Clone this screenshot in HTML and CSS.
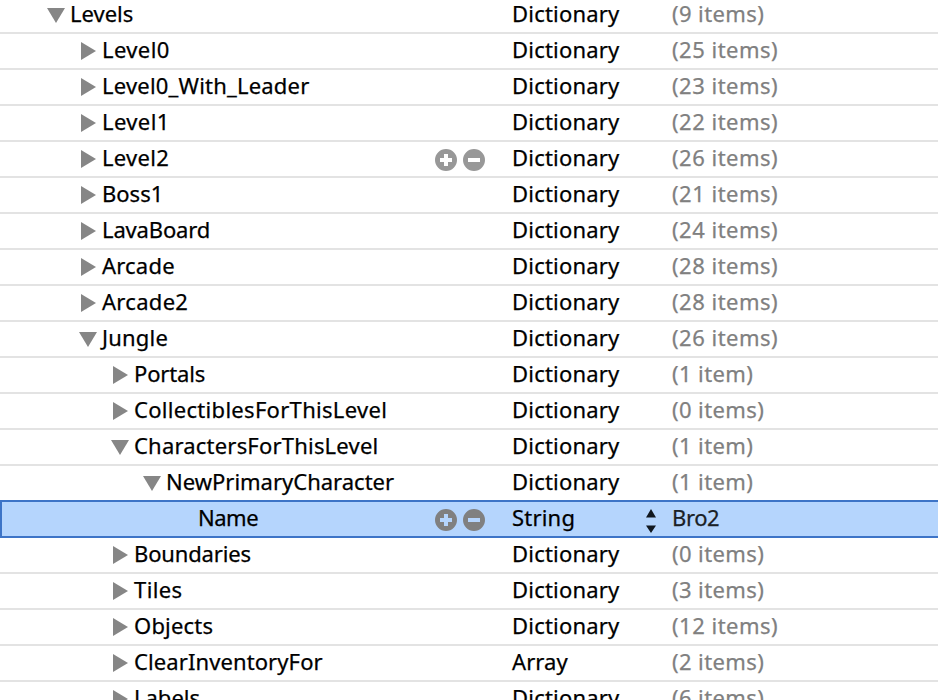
FILE: index.html
```
<!DOCTYPE html>
<html lang="en">
<head>
<meta charset="utf-8">
<title>Property list</title>
<link rel="stylesheet" href="styles.css">
</head>
<body>
<svg class="defs" aria-hidden="true">
  <symbol id="closed" viewBox="0 0 18 20"><path d="M2 1v18l15-9z"/></symbol>
  <symbol id="open" viewBox="0 0 18 20"><path d="M0 3h18L9 18z"/></symbol>
  <symbol id="plus" viewBox="0 0 22 22"><path fill-rule="evenodd" d="M11 0a11 11 0 1 0 0 22a11 11 0 1 0 0-22zM9 5h4v4h4v4h-4v4h-4v-4h-4v-4h4z"/></symbol>
  <symbol id="minus" viewBox="0 0 22 22"><path fill-rule="evenodd" d="M11 0a11 11 0 1 0 0 22a11 11 0 1 0 0-22zM5 9h12v4h-12z"/></symbol>
</svg>
<main class="plist">
  <div class="row"><div class="key d0"><svg class="tri"><use href="#open"/></svg><span>Levels</span></div><div class="type">Dictionary</div><div class="value few">(9 items)</div></div>
  <div class="row"><div class="key d1"><svg class="tri"><use href="#closed"/></svg><span class="w4">Level0</span></div><div class="type">Dictionary</div><div class="value">(25 items)</div></div>
  <div class="row"><div class="key d1"><svg class="tri"><use href="#closed"/></svg><span class="w2">Level0_With_Leader</span></div><div class="type">Dictionary</div><div class="value">(23 items)</div></div>
  <div class="row"><div class="key d1"><svg class="tri"><use href="#closed"/></svg><span class="w4">Level1</span></div><div class="type">Dictionary</div><div class="value">(22 items)</div></div>
  <div class="row"><div class="key d1"><svg class="tri"><use href="#closed"/></svg><span class="w3">Level2</span><div class="actions"><svg><use href="#plus"/></svg><svg><use href="#minus"/></svg></div></div><div class="type">Dictionary</div><div class="value">(26 items)</div></div>
  <div class="row"><div class="key d1"><svg class="tri"><use href="#closed"/></svg><span>Boss1</span></div><div class="type">Dictionary</div><div class="value">(21 items)</div></div>
  <div class="row"><div class="key d1"><svg class="tri"><use href="#closed"/></svg><span class="n1">LavaBoard</span></div><div class="type">Dictionary</div><div class="value">(24 items)</div></div>
  <div class="row"><div class="key d1"><svg class="tri"><use href="#closed"/></svg><span class="w2">Arcade</span></div><div class="type">Dictionary</div><div class="value">(28 items)</div></div>
  <div class="row"><div class="key d1"><svg class="tri"><use href="#closed"/></svg><span class="w3">Arcade2</span></div><div class="type">Dictionary</div><div class="value">(28 items)</div></div>
  <div class="row"><div class="key d1"><svg class="tri"><use href="#open"/></svg><span class="w2">Jungle</span></div><div class="type">Dictionary</div><div class="value">(26 items)</div></div>
  <div class="row"><div class="key d2"><svg class="tri"><use href="#closed"/></svg><span class="n1">Portals</span></div><div class="type">Dictionary</div><div class="value few">(1 item)</div></div>
  <div class="row"><div class="key d2"><svg class="tri"><use href="#closed"/></svg><span class="w3">CollectiblesForThisLevel</span></div><div class="type">Dictionary</div><div class="value few">(0 items)</div></div>
  <div class="row"><div class="key d2"><svg class="tri"><use href="#open"/></svg><span class="w2">CharactersForThisLevel</span></div><div class="type">Dictionary</div><div class="value few">(1 item)</div></div>
  <div class="row"><div class="key d3"><svg class="tri"><use href="#open"/></svg><span>NewPrimaryCharacter</span></div><div class="type">Dictionary</div><div class="value few">(1 item)</div></div>
  <div class="row selected"><div class="key d4"><span class="n5">Name</span><div class="actions"><svg><use href="#plus"/></svg><svg><use href="#minus"/></svg></div></div><div class="type"><span>String</span><svg class="stepper" viewBox="0 0 10 24"><path d="M0 8.500h10L5 0zM0 16.500h10L5 24z"/></svg></div><div class="value">Bro2</div></div>
  <div class="row"><div class="key d2"><svg class="tri"><use href="#closed"/></svg><span class="n1">Boundaries</span></div><div class="type">Dictionary</div><div class="value few">(0 items)</div></div>
  <div class="row"><div class="key d2"><svg class="tri"><use href="#closed"/></svg><span class="w4">Tiles</span></div><div class="type">Dictionary</div><div class="value few">(3 items)</div></div>
  <div class="row"><div class="key d2"><svg class="tri"><use href="#closed"/></svg><span class="w2">Objects</span></div><div class="type">Dictionary</div><div class="value">(12 items)</div></div>
  <div class="row"><div class="key d2"><svg class="tri"><use href="#closed"/></svg><span class="w1">ClearInventoryFor</span></div><div class="type"><span class="w1">Array</span></div><div class="value few">(2 items)</div></div>
  <div class="row"><div class="key d2"><svg class="tri"><use href="#closed"/></svg><span>Labels</span></div><div class="type">Dictionary</div><div class="value few">(6 items)</div></div>
</main>
</body>
</html>
```
FILE: styles.css
```
* { box-sizing: border-box; }
html, body { height: 100%; overflow: hidden; }
body {
  margin: 0;
  background: #fff;
  color: #000;
  font: 22px/30px "Noto Sans", "Open Sans", sans-serif;
  -webkit-text-stroke: 0.25px;
}
.defs { display: none; }
.plist { margin-top: -2px; }

.row {
  display: grid;
  grid-template-columns: 512px 160px 1fr;
  height: 36px;
  border-bottom: 2px solid #e3e3e3;
  white-space: nowrap;
}
.key, .type { display: flex; }
.key { padding-right: 27px; }
.type { letter-spacing: 0.2px; }
.value { color: #808080; letter-spacing: 0.5px; }
.value.few { letter-spacing: 0.4px; }

.d0 { padding-left: 47px; }
.d1 { padding-left: 79px; }
.d2 { padding-left: 111px; }
.d3 { padding-left: 143px; }
.d4 { padding-left: 198px; }

.tri { width: 18px; height: 20px; margin: 7px 5px 0 0; fill: #868686; }

.actions { display: flex; gap: 6px; margin: 7px 0 0 auto; }
.actions svg { width: 22px; height: 22px; fill: #989898; }

.selected {
  height: 38px;
  margin-top: -2px;
  border: 2px solid #3d74c7;
  border-right: 0;
  background: #b5d5fd;
  grid-template-columns: 510px 160px 1fr;
}
.selected .d4 { padding-left: 196px; }
.selected .actions svg { fill: #808080; }
.selected .value { color: #1a1f26; letter-spacing: -0.4px; }
.stepper { width: 10px; height: 24px; margin: 7px 16px 0 auto; fill: #111820; }

.n5 { letter-spacing: -0.5px; }
.n1 { letter-spacing: -0.15px; }
.w1 { letter-spacing: 0.1px; }
.w2 { letter-spacing: 0.2px; }
.w3 { letter-spacing: 0.3px; }
.w4 { letter-spacing: 0.4px; }
```
